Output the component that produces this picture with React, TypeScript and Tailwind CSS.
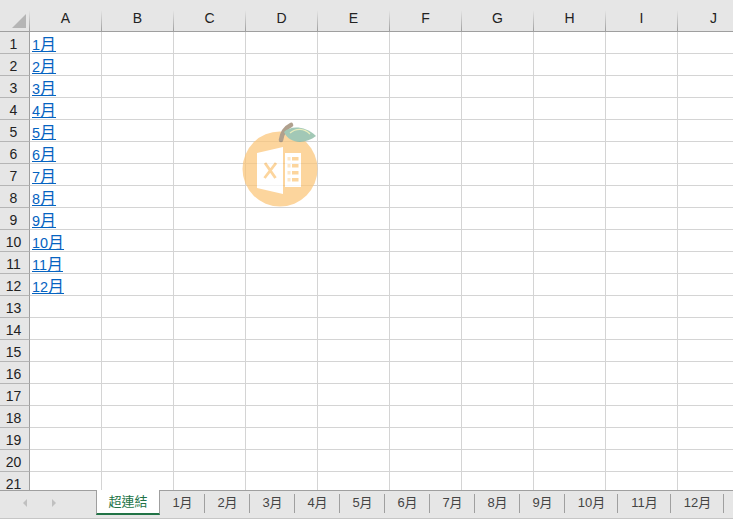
const FONT = { fontFamily: '"Liberation Sans", "Noto Sans CJK TC", sans-serif' };
const COLS = ["A", "B", "C", "D", "E", "F", "G", "H", "I", "J"];
const ROWS = Array.from({ length: 21 }, (_, i) => i + 1);
const TABS = ["1月", "2月", "3月", "4月", "5月", "6月", "7月", "8月", "9月", "10月", "11月", "12月"];

function Logo() {
  return (
    <svg className="absolute left-[230px] top-[115px] pointer-events-none" width="100" height="100" viewBox="0 0 100 100">
      <g opacity="0.72">
        <circle cx="50" cy="54" r="37.5" fill="#fcc578" />
        <path d="M51 25 C52 18 55 13 61 10" fill="none" stroke="#937c62" strokeWidth="4.6" strokeLinecap="round" />
        <path d="M54 17 C60 11 74 10 86 21 C76 29 60 30 54 17 Z" fill="#7fb49b" />
        <path d="M60 18 C66 13 74 13 80 19" fill="none" stroke="#e2e8a4" strokeWidth="1.4" />
        <path d="M27 38 L53 32 L53 79 L27 73 Z" fill="#fff" />
        <path d="M35 48 L45.5 63 M46 48 L34.5 63" fill="none" stroke="#fcc578" strokeWidth="2.8" />
        <path d="M55 38 H71 V72 H55 Z" fill="#fff" />
        <g fill="#fcc578">
          <rect x="62" y="42" width="6.5" height="3.5" />
          <rect x="62" y="49" width="6.5" height="3.5" />
          <rect x="62" y="56" width="6.5" height="3.5" />
          <rect x="62" y="63" width="6.5" height="3.5" />
        </g>
        <g fill="#fcc578" opacity="0.55">
          <rect x="57.5" y="42" width="3" height="3.5" />
          <rect x="57.5" y="49" width="3" height="3.5" />
          <rect x="57.5" y="56" width="3" height="3.5" />
          <rect x="57.5" y="63" width="3" height="3.5" />
        </g>
      </g>
    </svg>
  );
}

export default function App() {
  return (
    <div className="relative w-[733px] h-[520px] overflow-hidden bg-white flex flex-col" style={FONT}>
      <div className="h-[490px] overflow-hidden shrink-0">
        <div className="flex h-8 bg-[#e6e6e6] border-b border-[#9f9f9f]">
          <div className="w-[30px] shrink-0 relative">
            <svg width="30" height="31" viewBox="0 0 30 31" className="absolute inset-0">
              <path d="M12 28 L26 14 V28 Z" fill="#b5b5b5" />
            </svg>
            <div className="absolute right-0 bottom-0 w-px h-[21px] bg-gradient-to-b from-[#e6e6e6] to-[#9f9f9f]" />
          </div>
          {COLS.map((c) => (
            <div key={c} className="relative w-[72px] shrink-0 flex items-center justify-center pt-[6px] pr-px text-[14px] text-[#222]">
              {c}
              <div className="absolute right-0 bottom-0 w-px h-[21px] bg-gradient-to-b from-[#e6e6e6] to-[#9f9f9f]" />
            </div>
          ))}
        </div>
        {ROWS.map((r) => (
          <div key={r} className="flex h-[22px] border-b border-[#d4d4d4]">
            <div className="w-[30px] shrink-0 -mb-px bg-[#e6e6e6] border-r border-b border-r-[#9f9f9f] border-b-[#b5b5b5] flex items-center justify-center pt-[3px] pr-[2px] text-[14px] text-[#222]">
              {r}
            </div>
            {COLS.map((c) => (
              <div key={c} className="w-[72px] shrink-0 border-r border-[#d4d4d4] pl-[2px] pt-[2px] leading-[22px] text-[#0563c1]">
                {c === "A" && r <= 12 ? (
                  <span className="underline">
                    <span className="text-[14.4px]">{r}</span>
                    <span className="text-[16px]">月</span>
                  </span>
                ) : null}
              </div>
            ))}
          </div>
        ))}
      </div>
      <div className="flex h-[29px] bg-[#e6e6e6] border-t border-b border-t-[#9f9f9f] border-b-[#c6c6c6] shrink-0 text-[13px] text-[#444]">
        <div className="w-24 h-[23px] shrink-0 flex items-center pt-[1px] gap-[25px] pl-[23px]">
          <svg width="4" height="8" viewBox="0 0 4 8"><path d="M4 0 L0 4 L4 8 Z" fill="#c0c0c0" /></svg>
          <svg width="4" height="8" viewBox="0 0 4 8"><path d="M0 0 L4 4 L0 8 Z" fill="#c0c0c0" /></svg>
        </div>
        <div className="w-16 h-[25px] shrink-0 -mt-px bg-white border-l border-r border-b-2 border-l-[#9f9f9f] border-r-[#9f9f9f] border-b-[#217346] flex items-center justify-center pt-px text-[#217346]">
          超連結
        </div>
        {TABS.map((t, i) => (
          <div key={t} className={`${i < 9 ? "w-[45px]" : "w-[53px]"} h-[23px] shrink-0 flex items-center justify-center relative`}>
            {t}
            <div className="absolute right-0 top-[3px] h-[19px] w-px bg-[#9f9f9f]" />
          </div>
        ))}
      </div>
      <Logo />
    </div>
  );
}
